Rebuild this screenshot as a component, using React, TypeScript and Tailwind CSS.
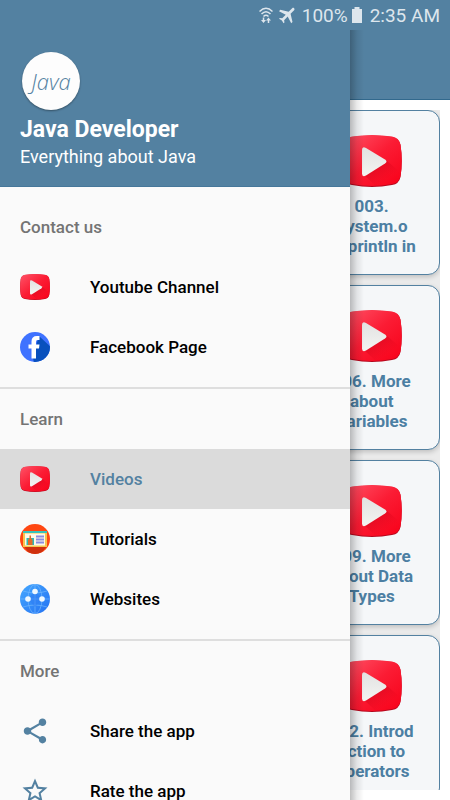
import React from "react";

const cards = [
  ["003.", "System.o", "ut.println in"],
  ["006. More", "about", "Variables"],
  ["009. More", "about Data", "Types"],
  ["012. Introd", "uction to", "Operators"],
];

function VideoIcon({ id, className }: { id: string; className: string }) {
  return (
    <svg viewBox="0 0 60 60" className={className} aria-hidden="true">
      <defs>
        <linearGradient id={id + "-red"} x1="0" y1="0" x2="1" y2="1">
          <stop offset="0" stopColor="#ff5468" />
          <stop offset="0.5" stopColor="#fb1c34" />
          <stop offset="1" stopColor="#f80018" />
        </linearGradient>
        <linearGradient id={id + "-shade"} x1="0" y1="0" x2="1" y2="1">
          <stop offset="0" stopColor="#b80014" stopOpacity="0.8" />
          <stop offset="0.7" stopColor="#e00018" stopOpacity="0" />
        </linearGradient>
        <linearGradient id={id + "-play"} x1="0" y1="0" x2="0" y2="1">
          <stop offset="0" stopColor="#e2e2e2" />
          <stop offset="1" stopColor="#f4f4f2" />
        </linearGradient>
      </defs>
      <path d="M10 6Q30 3 50 6Q57 7 58.500 14Q61 30 58.500 46Q57 53 50 54Q30 58 10 54Q3 53 1.500 46Q-1 30 1.500 14Q3 7 10 6Z" fill="#b5061c" />
      <path d="M10 5.500Q30 2.500 50 5.500Q57 6.500 58.500 13.500Q61 30 58.500 45Q57 52 50 53Q30 57 10 53Q3 52 1.500 45Q-1 30 1.500 13.500Q3 6.500 10 5.500Z" fill={`url(#${id}-red)`} />
      <path d="M44 29L59 42Q57 52 50 53Q42 55 34 55L21 43Z" fill={`url(#${id}-shade)`} />
      <path d="M20 19Q20 15 24 17L43 28.500Q46 30.500 43 32.500L24 44.500Q20 46.500 20 42.500Z" fill={`url(#${id}-play)`} />
    </svg>
  );
}

function FacebookIcon() {
  return (
    <svg viewBox="0 0 30 30" className="size-[30px]" aria-hidden="true">
      <defs>
        <clipPath id="fb-clip"><circle cx="15" cy="15" r="15" /></clipPath>
      </defs>
      <g clipPath="url(#fb-clip)">
        <rect width="30" height="30" fill="#3f72ff" />
        <path d="M19 4L32 16V32H14L13 25L16 14Z" fill="#0850bd" />
        <path d="M19.500 4V8H17.500Q16 8 16 10V12.500H19.500L19 16.500H16V26.500H11.500V16.500H8.500V12.500H11.500V9.500Q11.500 4 17 4Z" fill="#fff" />
      </g>
    </svg>
  );
}

function TutorialIcon() {
  return (
    <svg viewBox="0 0 30 30" className="size-[30px]" aria-hidden="true">
      <circle cx="15" cy="15" r="15" fill="#ff4712" />
      <path d="M4 22H27L22 28Q15 32 8 28Z" fill="#cf300e" />
      <rect x="3" y="7" width="24" height="16" fill="#f5c64e" />
      <rect x="3" y="7" width="24" height="2" fill="#35c3bd" />
      <rect x="5" y="9.500" width="20" height="12" fill="#fff8e7" />
      <rect x="6.500" y="14" width="7.500" height="7" fill="#2cb9b4" />
      <path d="M8 21V16L9.500 14V11.500H11V14L12.500 16V21Z" fill="#e36b28" />
      <path d="M16 12.500H24M16 15.500H24M16 18.500H24" stroke="#8b8ce0" strokeWidth="2" />
    </svg>
  );
}

function WebsiteIcon() {
  return (
    <svg viewBox="0 0 30 30" className="size-[30px]" aria-hidden="true">
      <defs>
        <linearGradient id="globe" x1="0" y1="0" x2="1" y2="1">
          <stop offset="0" stopColor="#45a8ff" />
          <stop offset="1" stopColor="#2472f2" />
        </linearGradient>
      </defs>
      <circle cx="15" cy="15" r="15" fill="url(#globe)" />
      <g fill="none" stroke="#78bdff" strokeWidth="0.800" opacity="0.800">
        <ellipse cx="15" cy="15" rx="7" ry="14.500" />
        <path d="M15 0V30M0 15H30M3 7Q15 11 27 7M3 23Q15 19 27 23" />
      </g>
      <path d="M15 7L8 15L15 23L22 15Z" fill="#2d7cf4" opacity="0.500" />
      <g fill="#eef8ff">
        <circle cx="15" cy="7.500" r="2.800" />
        <circle cx="8" cy="15" r="2.800" />
        <circle cx="22" cy="15" r="2.800" />
      </g>
    </svg>
  );
}

function ShareIcon() {
  return (
    <svg viewBox="0 0 24 24" className="size-[30px] fill-[#5381a1]" aria-hidden="true">
      <path d="M18 16.080c-.76 0-1.440.3-1.960.77L8.910 12.700c.05-.23.09-.46.09-.7s-.04-.47-.09-.7l7.050-4.110c.54.5 1.250.81 2.040.81 1.660 0 3-1.340 3-3s-1.340-3-3-3-3 1.340-3 3c0 .24.04.47.09.7L8.040 9.810C7.500 9.310 6.790 9 6 9c-1.660 0-3 1.340-3 3s1.340 3 3 3c.79 0 1.500-.31 2.040-.81l7.120 4.160c-.05.21-.08.43-.08.65 0 1.610 1.310 2.920 2.920 2.920s2.920-1.310 2.920-2.920-1.310-2.920-2.920-2.920z" />
    </svg>
  );
}

function StarIcon() {
  return (
    <svg viewBox="0 0 24 24" className="size-[30px] fill-[#5381a1]" aria-hidden="true">
      <path d="M22 9.240l-7.190-.62L12 2 9.190 8.630 2 9.240l5.460 4.730L5.820 21 12 17.270 18.180 21l-1.630-7.030L22 9.240zM12 15.400l-3.760 2.270 1-4.280-3.320-2.880 4.380-.38L12 6.100l1.710 4.040 4.380.38-3.320 2.880 1 4.280L12 15.400z" />
    </svg>
  );
}

function StatusBar() {
  return (
    <div className="flex h-[30px] shrink-0 items-center justify-end bg-[#5381a1] pr-[10px] text-[19px] leading-[30px] text-[#dde6ed]">
      <svg viewBox="0 0 14 18" className="mr-[5px] h-[18px] w-[14px]" aria-label="Wi-Fi">
        <g fill="none" stroke="currentColor" strokeWidth="1.500">
          <path d="M.5 5.500Q7 -1 13.500 5.500M2.500 8Q7 3.500 11.500 8M4.500 10.500Q7 8 9.500 10.500" />
          <path d="M4.500 11.500V15M9.500 17V13.500" />
        </g>
        <path d="M2 14H7L4.500 17ZM7 14.500H12L9.500 11.500Z" fill="currentColor" />
      </svg>
      <svg viewBox="1 1 22 22" className="mr-[4px] size-[20px] rotate-45" aria-label="Airplane mode">
        <path d="M21 16v-2l-8-5V3.500c0-.83-.67-1.500-1.500-1.500S10 2.670 10 3.500V9l-8 5v2l8-2.500V19l-2 1.500V22l3.500-1 3.500 1v-1.500L13 19v-5.500l8 2.500z" fill="currentColor" />
      </svg>
      <span className="pt-[2px]">100%</span>
      <svg viewBox="0 0 10 16" className="mr-[8px] ml-[4px] h-[16px] w-[10px]" aria-label="Battery full">
        <path d="M2.500 0H7.500V2H10V16H0V2H2.500Z" fill="currentColor" />
      </svg>
      <span className="pt-[2px]">2:35 AM</span>
    </div>
  );
}

type ItemProps = { icon: React.ReactNode; label: string; active?: boolean };

function Item({ icon, label, active }: ItemProps) {
  return (
    <li>
      <a
        href="#"
        aria-current={active ? "page" : undefined}
        className={
          "flex h-[60px] items-center gap-[40px] px-[20px] text-[17px] font-medium " +
          (active ? "bg-[#dbdbdb] text-[#5381a1]" : "text-black")
        }
      >
        {icon}
        <span className="pt-[2px]">{label}</span>
      </a>
    </li>
  );
}

function Section({ title, children }: { title: string; children: React.ReactNode }) {
  return (
    <section>
      <h2 className="flex h-[60px] items-center px-[20px] pt-[2px] text-[17px] font-medium text-[#747474]">{title}</h2>
      <ul className="pb-[10px]">{children}</ul>
    </section>
  );
}

function Drawer() {
  return (
    <aside className="absolute inset-y-0 left-0 w-[350px] max-w-full overflow-hidden bg-[#fafafa]">
      <header className="border-b border-[#46779a] bg-[#5381a1] px-[20px] pt-[22px] pb-[17px] text-white">
        <div className="mx-[2px] flex size-[58px] items-center justify-center rounded-full bg-[#fdfdfd] font-['Open_Sans',sans-serif] text-[22px] font-light text-[#5381a1] italic shadow-[0_1px_2px_#00000060]">
          Java
        </div>
        <h1 className="mt-[5px] text-[23px] leading-[30px] font-bold">Java Developer</h1>
        <p className="text-[18px] leading-[24px]">Everything about Java</p>
      </header>
      <nav className="divide-y-2 divide-[#dedede] pt-[10px]">
        <Section title="Contact us">
          <Item icon={<VideoIcon id="channel" className="size-[30px]" />} label="Youtube Channel" />
          <Item icon={<FacebookIcon />} label="Facebook Page" />
        </Section>
        <Section title="Learn">
          <Item icon={<VideoIcon id="videos" className="size-[30px]" />} label="Videos" active />
          <Item icon={<TutorialIcon />} label="Tutorials" />
          <Item icon={<WebsiteIcon />} label="Websites" />
        </Section>
        <Section title="More">
          <Item icon={<ShareIcon />} label="Share the app" />
          <Item icon={<StarIcon />} label="Rate the app" />
        </Section>
      </nav>
    </aside>
  );
}

export default function App() {
  return (
    <div className="flex h-screen flex-col overflow-hidden bg-white font-[Roboto,sans-serif]">
      <StatusBar />
      <div className="relative flex min-h-0 flex-1 flex-col">
        <div className="h-[70px] shrink-0 border-b border-[#32698d] bg-[#5381a1]" />
        <main className="m-[10px] min-h-0 flex-1 overflow-hidden bg-[#ebebeb]">
          <div className="grid grid-cols-3 gap-[10px]">
            {cards.map((lines, i) => (
              <a
                key={lines[0]}
                href="#"
                className="col-start-3 flex h-[165px] flex-col items-center rounded-[12px] border border-[#5381a1] bg-[#f5f7f9] pt-[20px] text-center text-[17px] leading-[20px] font-bold text-[#4c7fa3] shadow-[0_2px_5px_#00000030]"
              >
                <VideoIcon id={"card" + i} className="mb-[5px] size-[60px]" />
                {lines.map((line) => (
                  <span key={line} className="whitespace-nowrap">{line}</span>
                ))}
              </a>
            ))}
          </div>
        </main>
        <div className="absolute inset-y-0 left-[350px] w-[14px] bg-linear-to-r from-black/25 via-black/8 to-transparent" />
        <Drawer />
      </div>
    </div>
  );
}
